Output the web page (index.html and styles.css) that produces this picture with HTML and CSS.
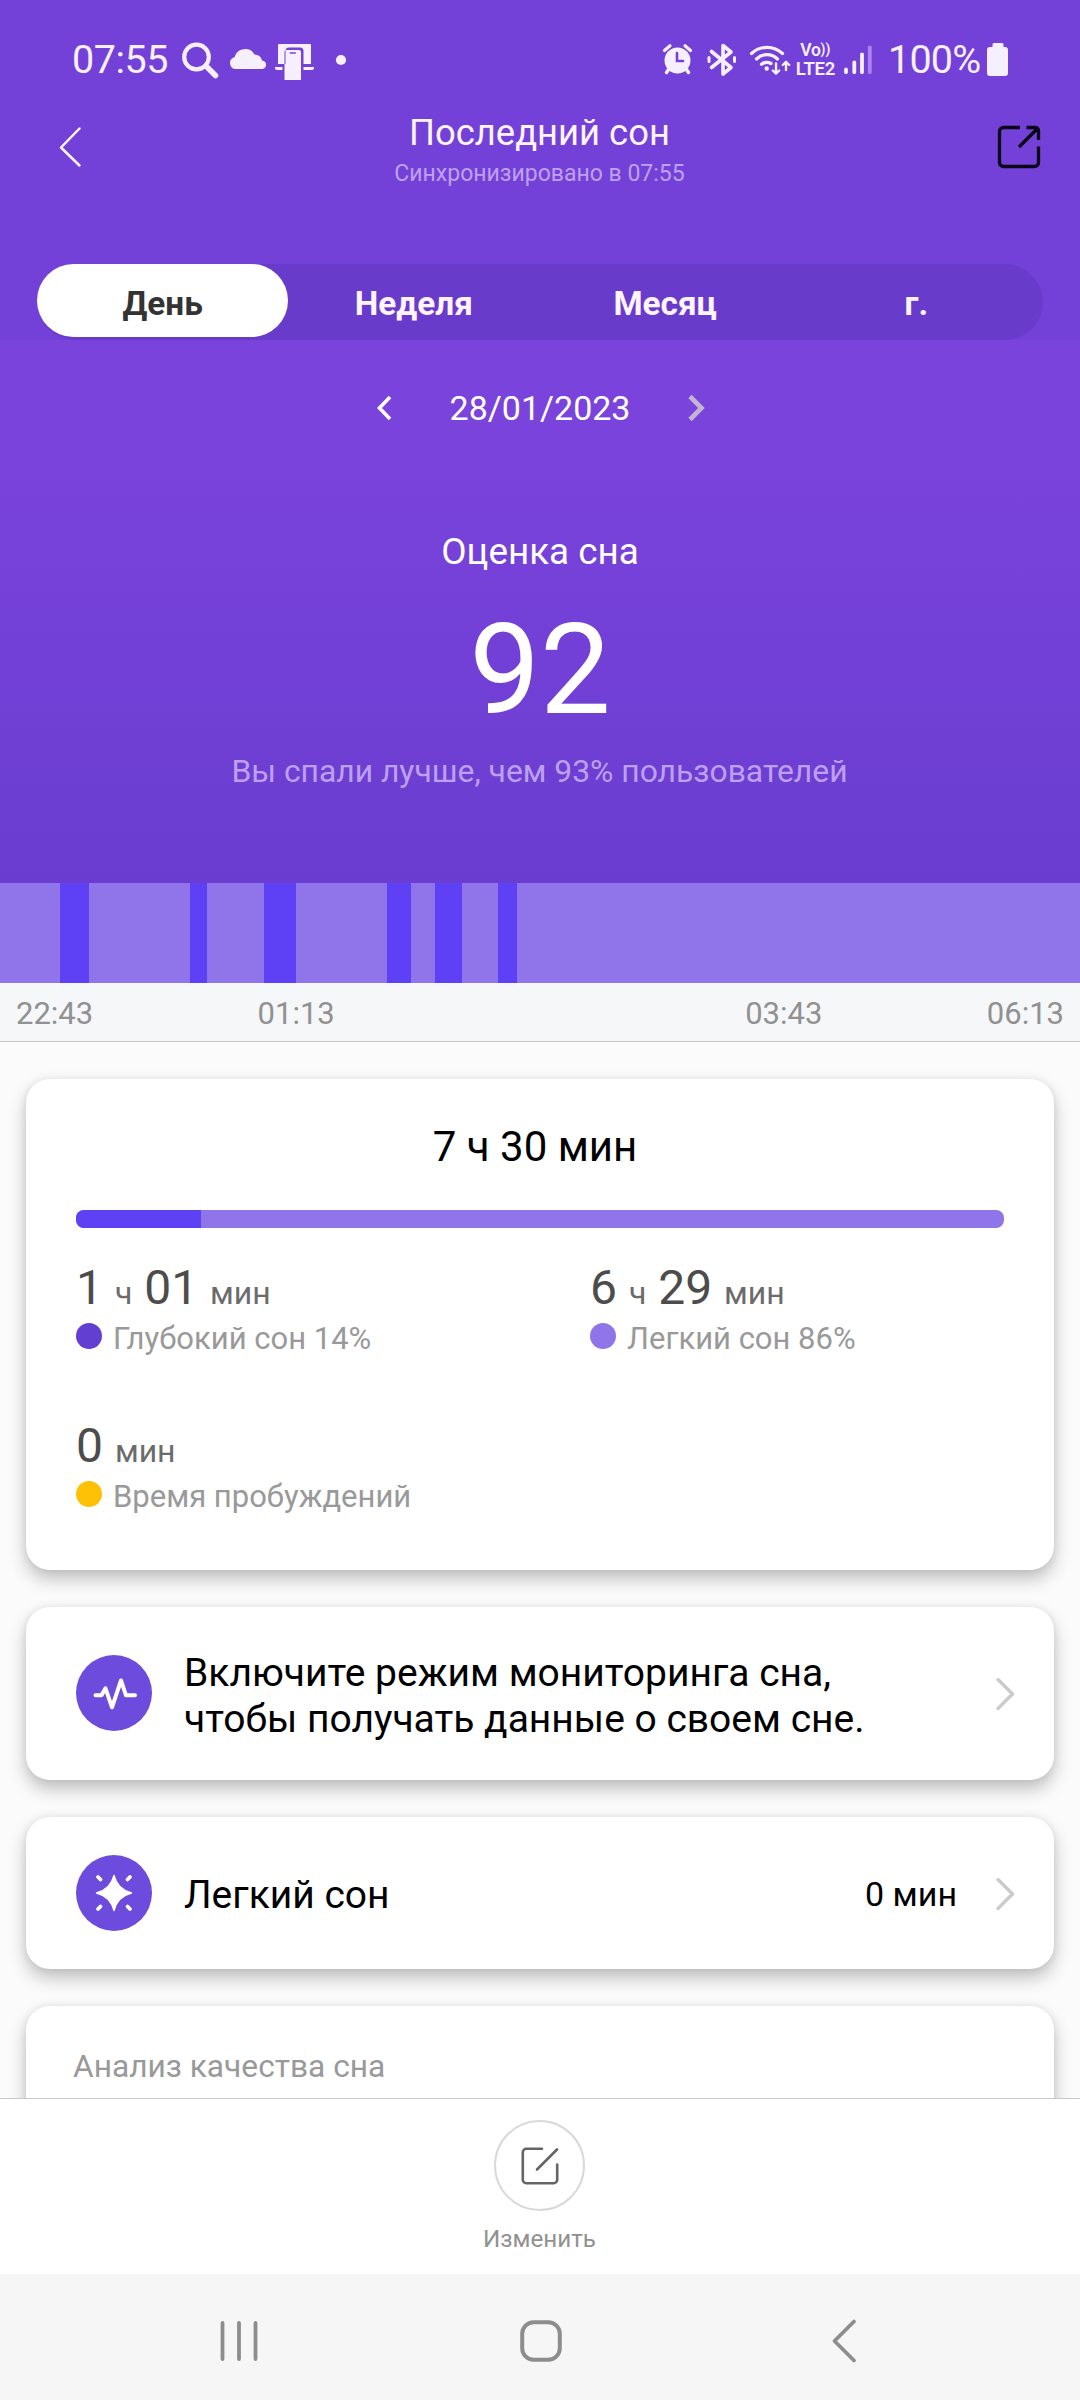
FILE: index.html
```html
<!DOCTYPE html>
<html lang="ru">
<head>
<meta charset="utf-8">
<title>Последний сон</title>
<link rel="stylesheet" href="styles.css">
</head>
<body>
<div class="screen">
  <header class="top">
    <div class="status">
      <span class="clock">07:55</span>
      <svg class="status-left" width="170" height="40" viewBox="180 40 170 40" fill="#f6effd">
        <g fill="none" stroke="#f6effd"><circle cx="196.500" cy="57" r="12.300" stroke-width="4.200"/><path d="M206 66L215.500 75.500" stroke-width="5.600" stroke-linecap="round"/></g>
        <path d="M236 69a6 6 0 0 1-1.500-11.800a11 11 0 0 1 20-2.800a7.500 7.500 0 0 1 7.500 6a4.300 4.300 0 0 1-.5 8.600z"/>
        <path d="M279 44h31a1 1 0 0 1 1 1v19h-7.500V51a3.500 3.500 0 0 0-3.500-3.500h-11a3.500 3.500 0 0 0-3.500 3.500v13H278V45a1 1 0 0 1 1-1zM275 67h7.500v3H277a2 2 0 0 1-2-2zM303.500 67h10.500v1a2 2 0 0 1-2 2h-8.500zM286.500 50h12.500a2 2 0 0 1 2 2v28h-16.500V52a2 2 0 0 1 2-2zm3.300 2.200v1.600h6v-1.600z" fill-rule="evenodd"/>
        <circle cx="341" cy="60" r="5.100"/>
      </svg>
      <svg class="status-right" width="130" height="34" viewBox="662 43 130 34" fill="none" stroke="#f6effd" stroke-linecap="round">
        <circle cx="677.500" cy="60.500" r="13" fill="#f6effd" stroke="none"/>
        <path d="M664.500 50.500l5.500-4.800M690.500 50.500l-5.500-4.800" stroke-width="3.200"/>
        <path d="M668.500 69.500l-2 3M686.500 69.500l2 3" stroke-width="3.500"/>
        <path d="M677 53v8h6" stroke="#7341d7" stroke-width="2.600"/>
        <path d="M711.500 51.500L731 67.500L723 74V45.500L731 52L711.500 67.500" stroke-width="3.600" stroke-linejoin="round"/>
        <path d="M709 57.500v4M734.500 57.500v4" stroke-width="3"/>
        <path d="M751.500 53.500a22.500 22.500 0 0 1 31 0M756.500 59a15 15 0 0 1 21 0M761.500 64.300a8.500 8.500 0 0 1 9.500-.8" stroke-width="3.200"/>
        <circle cx="766.700" cy="68.500" r="2.200" fill="#f6effd" stroke="none"/>
        <path d="M776 63.500v10M772.800 70.500l3.200 3.200l3.200-3.200M786 70V62M782.800 65l3.200-3.200l3.200 3.200" stroke-width="2.400" stroke-linejoin="round"/>
      </svg>
      <span class="volte"><span class="volte-a">Vo<span class="waves">))</span></span><span class="volte-b">LTE2</span></span>
      <svg class="signal" width="30" height="30" viewBox="844 45 30 30" stroke="#f6effd" stroke-width="3.800" stroke-linecap="round"><path d="M846 69.500v2.700M854.300 62.300v9.900M862 54.300v17.900"/><path d="M869.800 47.300v24.900" stroke="#ac84f2"/></svg>
      <span class="percent">100%</span>
      <svg class="battery" width="22" height="34" viewBox="987 43 22 34" fill="#f6effd"><path d="M994 43h8a1.500 1.500 0 0 1 1.500 1.500V47H1005a3 3 0 0 1 3 3v23a3 3 0 0 1-3 3h-15a3 3 0 0 1-3-3V50a3 3 0 0 1 3-3h2.500v-2.500A1.500 1.500 0 0 1 994 43z"/></svg>
    </div>
    <div class="titlebar">
      <svg class="back" width="24" height="42" viewBox="0 0 24 42" fill="none" stroke="#fdf6ff" stroke-width="2.500" stroke-linecap="round" stroke-linejoin="round"><path d="M21.500 2.500L3 21.500L21.500 39.500"/></svg>
      <div class="titles"><h1 class="title">Последний сон</h1><p class="sync">Синхронизировано в 07:55</p></div>
      <svg class="share" width="44" height="44" viewBox="0 0 44 44" fill="none" stroke="#0a0216" stroke-width="3.300"><path d="M23 2.500H6.500a4 4 0 0 0-4 4V37.500a4 4 0 0 0 4 4H37.500a4 4 0 0 0 4-4V21.500M29.500 2.500h9a3 3 0 0 1 3 3V15M40.500 3.500L22 22"/></svg>
    </div>
    <nav class="tabs"><span class="tab tab-on">День</span><span class="tab">Неделя</span><span class="tab">Месяц</span><span class="tab">г.</span></nav>
  </header>
  <section class="score">
    <div class="date">
      <svg width="18" height="28" viewBox="0 0 18 28" fill="none" stroke="#fff" stroke-width="3.600"><path d="M15 3L4.500 14L15 25"/></svg>
      <span class="date-text">28/01/2023</span>
      <svg width="20" height="28" viewBox="0 0 20 28" fill="none" stroke="#c3b4cf" stroke-width="4.600"><path d="M3 2.500L14.500 14L3 25.500"/></svg>
    </div>
    <h2 class="score-label">Оценка сна</h2>
    <div class="score-value">92</div>
    <p class="score-note">Вы спали лучше, чем 93% пользователей</p>
  </section>
  <div class="timeline">
    <i style="width:60px"></i><i class="deep" style="width:29px"></i><i style="width:101px"></i><i class="deep" style="width:17px"></i><i style="width:57px"></i><i class="deep" style="width:32px"></i><i style="width:91px"></i><i class="deep" style="width:24px"></i><i style="width:24px"></i><i class="deep" style="width:27px"></i><i style="width:36px"></i><i class="deep" style="width:19px"></i>
  </div>
  <div class="axis"><span>22:43</span><span>01:13</span><span class="axis-late">03:43</span><span>06:13</span></div>
  <main class="cards">
    <section class="card summary">
      <h2 class="total">7 ч 30 мин</h2>
      <div class="ratio"><div class="ratio-deep"></div></div>
      <div class="stats">
        <div class="stat"><div class="amount">1 <small>ч</small> 01 <small>мин</small></div><div class="legend"><i class="dot dot-deep"></i>Глубокий сон 14%</div></div>
        <div class="stat"><div class="amount">6 <small>ч</small> 29 <small>мин</small></div><div class="legend"><i class="dot dot-light"></i>Легкий сон 86%</div></div>
        <div class="stat"><div class="amount">0 <small>мин</small></div><div class="legend"><i class="dot dot-wake"></i>Время пробуждений</div></div>
      </div>
    </section>
    <section class="card row row-monitor">
      <svg class="badge" width="76" height="76" viewBox="0 0 76 76"><circle cx="38" cy="38" r="38" fill="#6c4bdd"/><path d="M19.500 40.300h6l4-7l6.500 19L45 25.500L50 40.300h9" fill="none" stroke="#fff" stroke-width="4" stroke-linecap="round" stroke-linejoin="round"/></svg>
      <p class="row-text">Включите режим мониторинга сна,<br>чтобы получать данные о своем сне.</p>
      <svg class="go" width="20" height="34" viewBox="0 0 20 34" fill="none" stroke="#cacaca" stroke-width="3.400" stroke-linecap="round" stroke-linejoin="round"><path d="M3 2.500L17.500 17L3 31.500"/></svg>
    </section>
    <section class="card row row-light">
      <svg class="badge" width="76" height="76" viewBox="0 0 76 76"><circle cx="38" cy="38" r="38" fill="#6c4bdd"/><path d="M38 20.500Q41.500 34.500 55.500 38Q41.500 41.500 38 55.500Q34.500 41.500 20.500 38Q34.500 34.500 38 20.500z" fill="#fff" stroke="#fff" stroke-width="1.400" stroke-linejoin="round"/><path d="M22 22l2.500 2.500M54 22l-2.500 2.500M22 54l2.500-2.500M54 54l-2.500-2.500" stroke="#fff" stroke-width="3.800" stroke-linecap="round"/></svg>
      <p class="row-text">Легкий сон</p>
      <span class="row-value">0 мин</span>
      <svg class="go" width="20" height="34" viewBox="0 0 20 34" fill="none" stroke="#cacaca" stroke-width="3.400" stroke-linecap="round" stroke-linejoin="round"><path d="M3 2.500L17.500 17L3 31.500"/></svg>
    </section>
    <section class="card analysis"><h2 class="analysis-title">Анализ качества сна</h2></section>
  </main>
  <footer class="edit">
    <span class="edit-button"><svg width="38" height="38" viewBox="0 0 38 38" fill="none" stroke="#656565" stroke-width="2.600" stroke-linecap="round"><path d="M21 1.800H5.300a3.500 3.500 0 0 0-3.500 3.500V32.700a3.500 3.500 0 0 0 3.500 3.500H32.700a3.500 3.500 0 0 0 3.500-3.500V17.500M36 2.500L16 22.500"/></svg></span>
    <span class="edit-label">Изменить</span>
  </footer>
  <nav class="system">
    <svg width="42" height="44" viewBox="0 0 42 44" stroke="#8d8d8d" stroke-width="3.800" stroke-linecap="round"><path d="M4.500 4v36M21 4v36M37.500 4v36"/></svg>
    <svg class="home" width="44" height="44" viewBox="0 0 44 44" fill="none" stroke="#8d8d8d" stroke-width="4"><rect x="3.200" y="3.200" width="37.600" height="37.600" rx="11.500"/></svg>
    <svg width="26" height="46" viewBox="0 0 26 46" fill="none" stroke="#8d8d8d" stroke-width="3.800" stroke-linecap="round" stroke-linejoin="round"><path d="M23 3.500L3.500 23L23 42.500"/></svg>
  </nav>
</div>
</body>
</html>
```
FILE: styles.css
```css
* { box-sizing: border-box; margin: 0; padding: 0; }
body { font-family: Roboto, "Noto Sans", sans-serif; font-weight: 400; background: #fbfbfb; }
h1, h2 { font-weight: 400; }
svg { display: block; flex: none; }
.screen { width: 1080px; height: 2400px; display: flex; flex-direction: column; overflow: hidden; }

.top { height: 340px; background: #7341d7; color: #fdf4ff; }
.status { height: 100px; display: flex; align-items: flex-start; padding: 40px 71px 0 72px; color: #f6effd; }
.clock { width: 108px; font-size: 39.500px; line-height: 40px; letter-spacing: -.5px; }
.status-right { margin: 3px 0 0 312px; }
.volte { width: 43px; margin: 2px 0 0 2px; display: flex; flex-direction: column; align-items: center; font-weight: 600; }
.volte-a { display: flex; font-size: 17.500px; line-height: 17px; letter-spacing: -.4px; }
.waves { font-size: 14px; line-height: 15px; letter-spacing: .2px; }
.volte-b { margin-top: 1px; font-size: 18.500px; line-height: 18px; letter-spacing: -.2px; }
.signal { margin: 5px 0 0 7px; }
.percent { width: 99px; margin-left: 14px; font-size: 39.500px; line-height: 40px; letter-spacing: -.8px; }
.battery { margin-top: 3px; }
.titlebar { height: 164px; display: flex; justify-content: space-between; padding: 0 39px 0 58px; }
.back { margin-top: 26px; }
.titles { padding-top: 11px; text-align: center; }
.title { font-size: 36.400px; line-height: 43px; }
.sync { margin-top: 8px; font-size: 23px; line-height: 24px; color: #bfa0f3; }
.share { margin-top: 25px; }
.tabs { height: 76px; margin: 0 37px; padding-right: 1px; display: flex; border-radius: 38px; background: #693bcb; }
.tab { flex: 1; height: 73px; border-radius: 37px; text-align: center; font-size: 33.300px; line-height: 79px; font-weight: 700; }
.tab-on { background: #fff; color: #333; }

.score { height: 543px; padding-top: 45px; text-align: center; color: #fff; background: linear-gradient(#7a43dc 0, #7a43dc 20%, #6a3dd0 100%); }
.date { height: 46px; display: flex; align-items: center; justify-content: center; gap: 57px; padding-left: 2px; font-size: 34px; line-height: 46px; }
.score-label { margin-top: 98px; font-size: 36.800px; line-height: 46px; }
.score-value { margin-top: 25px; font-size: 126px; line-height: 140px; }
.score-note { margin-top: 11px; padding-right: 1px; font-size: 31.850px; line-height: 40px; color: #bda0f0; }

.timeline { height: 100px; display: flex; background: #9074ea; }
.deep { background: #5f41f5; }
.axis { height: 59px; display: flex; justify-content: space-between; padding: 1px 16px 0; border-bottom: 1px solid #c4c5c6; background: #f6f7f9; color: #919191; font-size: 31px; line-height: 60px; }
.axis-late { margin-left: 246px; }

.cards { height: 1056px; padding: 37px 26px 0; display: flex; flex-direction: column; gap: 37px; overflow: hidden; }
.card { flex: none; border-radius: 24px; background: #fff; box-shadow: 0 9px 18px rgba(0, 0, 0, .24), 0 0 8px rgba(0, 0, 0, .07); }
.summary { height: 491px; padding: 43px 50px 0; }
.total { padding-right: 10px; text-align: center; font-size: 42px; line-height: 50px; color: #000; }
.ratio { height: 18px; margin-top: 38px; border-radius: 8px; background: #9074ea; overflow: hidden; }
.ratio-deep { width: 125px; height: 18px; background: #5f41f5; }
.stats { display: grid; grid-template-columns: 514px 1fr; grid-auto-rows: 158px; margin-top: 36px; }
.amount { font-size: 48px; line-height: 48px; color: #4c4c4c; }
.amount small { font-size: 32px; line-height: 32px; color: #6b6b6b; }
.legend { display: flex; align-items: center; gap: 11px; height: 40px; margin-top: 6px; font-size: 31px; color: #999; }
.dot { width: 26px; height: 26px; margin-bottom: 4px; border-radius: 50%; }
.dot-deep { background: #623fd1; }
.dot-light { background: #9074ea; }
.dot-wake { background: #ffc105; }
.row { display: flex; align-items: center; padding: 0 39px 0 50px; }
.row-monitor { height: 173px; }
.row-monitor .badge { margin-bottom: 1px; }
.row-light { height: 152px; }
.row-text { flex: 1; margin-left: 32px; padding-top: 4px; font-size: 39px; line-height: 46px; color: #000; }
.row-value { margin-right: 38px; padding-top: 2px; font-size: 34px; color: #000; }
.go { margin-top: 1px; }
.analysis { height: 300px; padding: 39px 47px; }
.analysis-title { font-size: 31.700px; line-height: 44px; color: #999; }

.edit { height: 176px; display: flex; flex-direction: column; align-items: center; padding: 21px 1px 0 0; border-top: 1px solid #c8c8c8; background: #fff; }
.edit-button { width: 91px; height: 91px; display: flex; align-items: center; justify-content: center; border: 2px solid #d9d9d9; border-radius: 50%; }
.edit-label { margin-top: 12px; font-size: 24.200px; line-height: 32px; color: #919191; }
.system { height: 126px; display: flex; align-items: center; padding: 7px 0 0 218px; background: #f6f6f6; }
.home { margin: 0 268px 0 259px; }
```
